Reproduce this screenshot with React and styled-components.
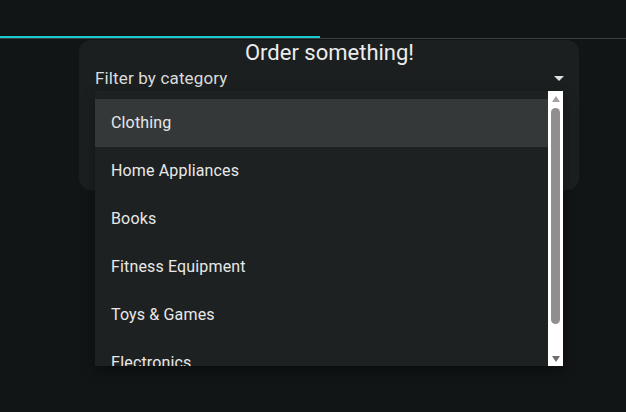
import React from "react";
import styled, { createGlobalStyle } from "styled-components";

const GlobalStyle = createGlobalStyle`
  html, body {
    margin: 0;
    padding: 0;
    background: #111516;
    font-family: Roboto, "Noto Sans", sans-serif;
    color: #e6e6e6;
  }
`;

const Page = styled.div`
  width: 626px;
  height: 412px;
  overflow: hidden;
`;

const TabsBar = styled.div`
  height: 38px;
  border-bottom: 1px solid #3a3e40;
  display: flex;
  align-items: flex-end;
`;

const TabIndicator = styled.div`
  width: 320px;
  height: 2px;
  background: #19c9d2;
`;

const Card = styled.div`
  position: relative;
  margin: 1px 0 0 79px;
  width: 500px;
  height: 150px;
  box-sizing: border-box;
  background: #1b1f20;
  border-radius: 12px;
  padding: 0 15px 0 16px;
`;

const Title = styled.h1`
  margin: 0;
  font-size: 22px;
  font-weight: 400;
  line-height: 25px;
  text-align: center;
  color: #ececec;
`;

const SelectRow = styled.div`
  height: 26px;
  display: flex;
  align-items: center;
  justify-content: space-between;
  font-size: 17px;
  letter-spacing: 0.15px;
  color: #dcdcdc;
`;

const Arrow = styled.div`
  width: 0;
  height: 0;
  border-left: 5px solid transparent;
  border-right: 5px solid transparent;
  border-top: 5px solid #e0e0e0;
`;

const Menu = styled.div`
  position: absolute;
  top: 51px;
  left: 16px;
  width: 468px;
  height: 275px;
  display: flex;
  background: #1e2122;
  box-shadow: 0 5px 12px rgba(0, 0, 0, 0.35);
`;

const List = styled.ul`
  flex: 1;
  margin: 0;
  padding: 8px 0 0;
  list-style: none;
  overflow: hidden;
`;

const Item = styled.li`
  height: 48px;
  display: flex;
  align-items: center;
  padding: 0 0 1px 16px;
  box-sizing: border-box;
  font-size: 16px;
  letter-spacing: 0.15px;
  color: #e8e8e8;
  background: ${({ active }) => (active ? "#353839" : "transparent")};
`;

const Scrollbar = styled.div`
  width: 15px;
  background: #ffffff;
  display: flex;
  flex-direction: column;
  align-items: center;
  padding: 5px 0 4px;
  box-sizing: border-box;
`;

const ScrollArrow = styled.div`
  width: 0;
  height: 0;
  border-left: 4px solid transparent;
  border-right: 4px solid transparent;
  ${({ down }) =>
    down
      ? "border-top: 6px solid #6f6f6f;"
      : "border-bottom: 6px solid #a3a3a3;"}
`;

const Thumb = styled.div`
  width: 9px;
  height: 216px;
  margin: 6px 0 auto;
  background: #8f8f8f;
  border-radius: 5px;
`;

const categories = [
  "Clothing",
  "Home Appliances",
  "Books",
  "Fitness Equipment",
  "Toys & Games",
  "Electronics",
];

export default function App() {
  return (
    <Page>
      <GlobalStyle />
      <TabsBar>
        <TabIndicator />
      </TabsBar>
      <Card>
        <Title>Order something!</Title>
        <SelectRow>
          <span>Filter by category</span>
          <Arrow />
        </SelectRow>
        <Menu>
          <List>
            {categories.map((c, i) => (
              <Item key={c} active={i === 0}>
                {c}
              </Item>
            ))}
          </List>
          <Scrollbar>
            <ScrollArrow />
            <Thumb />
            <ScrollArrow down />
          </Scrollbar>
        </Menu>
      </Card>
    </Page>
  );
}
